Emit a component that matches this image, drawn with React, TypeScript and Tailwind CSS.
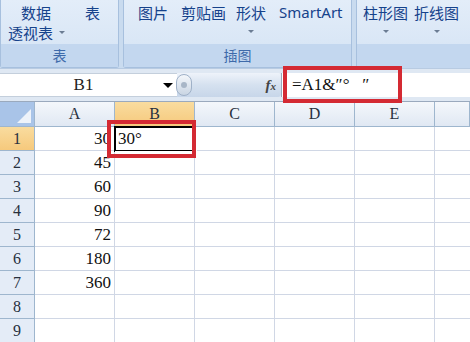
import React from 'react';

// 示例数据
const values = ['30', '45', '60', '90', '72', '180', '360', '', ''];
const cols = ['A', 'B', 'C', 'D', 'E', ''];

const ribbonText = 'text-[#15428b] text-[15px] leading-none whitespace-nowrap shrink-0';
const serif = { fontFamily: '"Liberation Serif", "Noto Sans CJK SC", serif' };
const cjk = { fontFamily: '"Noto Sans CJK SC", "Noto Sans", sans-serif' };

function Caret() {
  return <span className="inline-block w-0 h-0 border-l-[3px] border-r-[3px] border-t-[3px] border-l-transparent border-r-transparent border-t-[#6b7c93]" />;
}

function Ribbon() {
  return (
    <div className="h-[68px] flex bg-[#c9dbef]" style={cjk}>
      {/* 表 */}
      <div className="w-[119px] shrink-0 flex flex-col rounded-b-[3px] border border-t-0 border-[#a7c0de] bg-gradient-to-b from-[#e3edf9] to-[#d4e3f4]">
        <div className="h-[44px] flex gap-[19px] pl-[7px] pt-[5px]">
          <div className={`${ribbonText} flex flex-col gap-[5px]`}>
            <span className="pl-[13px]">数据</span>
            <span className="flex items-center gap-[6px]">透视表<Caret /></span>
          </div>
          <span className={`${ribbonText} pl-[1px]`}>表</span>
        </div>
        <div className="flex-1 flex items-center justify-center bg-[#c3d7ef] text-[#3e6aaa] text-[14px]">表</div>
      </div>
      <div className="w-[4px] shrink-0" />
      {/* 插图 */}
      <div className="w-[229px] shrink-0 flex flex-col rounded-b-[3px] border border-t-0 border-[#a7c0de] bg-gradient-to-b from-[#e3edf9] to-[#d4e3f4]">
        <div className="h-[44px] flex pl-[14px] pt-[5px]">
          <span className={ribbonText}>图片</span>
          <span className={`${ribbonText} ml-[13px]`}>剪贴画</span>
          <div className="flex flex-col items-center gap-[10px] shrink-0 ml-[10px]">
            <span className={ribbonText}>形状</span>
            <Caret />
          </div>
          <span className={`${ribbonText} ml-[13px]`} style={{ fontFamily: '"Noto Sans", sans-serif' }}>SmartArt</span>
        </div>
        <div className="flex-1 flex items-center justify-center bg-[#c3d7ef] text-[#3e6aaa] text-[14px]">插图</div>
      </div>
      <div className="w-[4px] shrink-0" />
      {/* 图表 */}
      <div className="flex-1 flex flex-col border-l border-[#a7c0de] bg-gradient-to-b from-[#e3edf9] to-[#d4e3f4]">
        <div className="h-[44px] flex pl-[6px] pt-[5px] gap-[6px]">
          <div className="flex flex-col items-center gap-[10px] shrink-0">
            <span className={ribbonText}>柱形图</span>
            <Caret />
          </div>
          <div className="flex flex-col items-center gap-[10px] shrink-0">
            <span className={ribbonText}>折线图</span>
            <Caret />
          </div>
          <div className="flex flex-col items-center gap-[10px] pl-[5px]">
            <span className="h-[15px]" />
            <Caret />
          </div>
        </div>
        <div className="flex-1 bg-[#c3d7ef]" />
      </div>
    </div>
  );
}

function FormulaBar() {
  return (
    <div className="h-[34px] flex items-center bg-[#dfe8f3] border-t border-[#b8cbe2] border-b border-b-[#9aa9bd]">
      <div className="w-[177px] h-[24px] bg-white flex items-center border-y border-[#c4cfdc] relative">
        <span className="flex-1 text-center text-[17px] text-[#222] pl-[4px]" style={serif}>B1</span>
        <span className="mr-[4px] w-0 h-0 border-l-[5px] border-r-[5px] border-t-[5px] border-l-transparent border-r-transparent border-t-black" />
      </div>
      <div className="flex-1 h-[24px] flex items-center bg-gradient-to-b from-[#eef3fa] via-[#d5e1ef] to-[#c7d6e9] rounded-r-[3px] relative">
        <span className="w-[16px] h-[22px] rounded-full -ml-[1px] bg-gradient-to-b from-[#f4f7fb] to-[#c9d5e3] border border-[#9fb1c8] flex items-center justify-center">
          <span className="w-[6px] h-[6px] rounded-full bg-[#a8b6c7]" />
        </span>
        <span className="ml-auto mr-[5px] italic text-[#444] text-[15px] font-bold" style={serif}>
          f<span className="text-[11px]">x</span>
        </span>
      </div>
      <div className="w-[189px] h-[24px] bg-white flex items-center border-l border-[#9aa9bd] pl-[10px]">
        <span className="text-[17px] text-[#111] whitespace-pre" style={serif}>=A1&amp;″°   ″</span>
      </div>
    </div>
  );
}

function Sheet() {
  return (
    <div className="grid grid-cols-[35px_80px_80px_80px_80px_80px_1fr]" style={serif}>
      {/* header row */}
      <div className="h-[25px] bg-[#a9c4e8] border-r border-b border-[#9eb6ce] relative overflow-hidden">
        <span className="absolute right-[3px] bottom-[3px] w-0 h-0 border-l-[14px] border-b-[14px] border-l-transparent border-b-white/80" />
      </div>
      {cols.map((c, i) => (
        <div
          key={i}
          className={`h-[25px] flex items-center justify-center text-[16px] text-[#27303e] border-r border-b border-[#9eb6ce] ${
            c === 'B' ? 'bg-gradient-to-b from-[#f9dc9f] to-[#f6c97c]' : 'bg-gradient-to-b from-[#f4f7fb] to-[#e0e8f3]'
          }`}
        >
          {c}
        </div>
      ))}
      {values.map((v, r) => (
        <React.Fragment key={r}>
          <div
            className={`h-[24px] flex items-center justify-center text-[16px] text-[#27303e] border-r border-b border-[#9eb6ce] ${
              r === 0 ? 'bg-gradient-to-b from-[#f9dc9f] to-[#f6c97c]' : 'bg-[#e4ecf7]'
            }`}
          >
            {r + 1}
          </div>
          <div className="h-[24px] flex items-center justify-end pr-[3px] text-[17px] text-[#111] border-r border-b border-[#d0d7e5] bg-white">
            {v}
          </div>
          <div className="h-[24px] border-r border-b border-[#d0d7e5] bg-white relative">
            {r === 0 && (
              <div className="absolute -left-[1px] -top-[1px] w-[82px] h-[26px] border-[2px] border-black flex items-center pl-[2px] text-[17px] text-[#111]">
                30°
                <span className="absolute -right-[3px] -bottom-[3px] w-[5px] h-[5px] bg-black border border-white" />
              </div>
            )}
          </div>
          <div className="h-[24px] border-r border-b border-[#d0d7e5] bg-white" />
          <div className="h-[24px] border-r border-b border-[#d0d7e5] bg-white" />
          <div className="h-[24px] border-r border-b border-[#d0d7e5] bg-white" />
          <div className="h-[24px] border-b border-[#d0d7e5] bg-white" />
        </React.Fragment>
      ))}
    </div>
  );
}

export default function App() {
  return (
    <div className="w-[470px] h-[342px] overflow-hidden bg-white relative">
      <Ribbon />
      <FormulaBar />
      <Sheet />
      {/* 红色标注框 */}
      <div className="absolute left-[283px] top-[66px] w-[119px] h-[37px] border-[4px] border-[#d42a33]" />
      <div className="absolute left-[107px] top-[120px] w-[89px] h-[38px] border-[4px] border-[#d42a33]" />
    </div>
  );
}
